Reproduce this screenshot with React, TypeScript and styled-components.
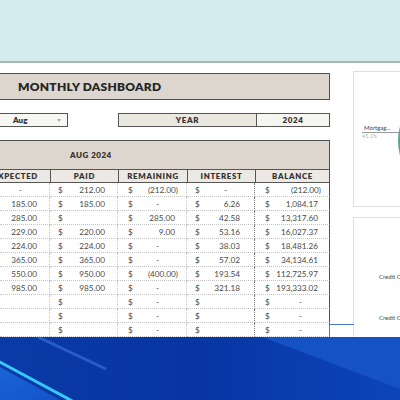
import React from "react";
import styled, { createGlobalStyle } from "styled-components";

const GlobalStyle = createGlobalStyle`
	html, body {
		margin: 0;
		padding: 0;
	}
	body {
		font-family: Lato, "Open Sans", "Liberation Sans", sans-serif;
	}
	#root {
		width: 400px;
		height: 400px;
		overflow: hidden;
	}
`;

const Screen = styled.div`
	display: flex;
	flex-direction: column;
	width: 400px;
	height: 400px;
	overflow: hidden;
	background: #fff;
`;

const TopBand = styled.div`
	height: 61px;
	flex: none;
	background: #d4ecee;
	border-bottom: 2px solid #a9b6b8;
`;

const Sheet = styled.div`
	position: relative;
	display: flex;
	gap: 23px;
	height: 274px;
	flex: none;
	overflow: hidden;
	background: #fff;
`;

const LeftCol = styled.div`
	width: 330px;
	flex: none;
	display: flex;
	flex-direction: column;
	padding-top: 10px;
`;

const TitleBar = styled.div`
	height: 29px;
	margin-left: -2px;
	box-sizing: border-box;
	border: 1.5px solid #505050;
	background: #dcd6ce;
	display: flex;
	align-items: center;
	padding-left: 19px;
	font-size: 12px;
	font-weight: 800;
	letter-spacing: 0.25px;
	color: #262626;
`;

const Controls = styled.div`
	display: flex;
	margin-top: 13px;
	height: 15px;
`;

const Select = styled.div`
	width: 70px;
	margin-left: -2px;
	box-sizing: border-box;
	border: 1.2px solid #555;
	background: #f9f7f3;
	display: flex;
	align-items: center;
	justify-content: space-between;
	padding: 0 6px 0 14px;
	font-size: 8px;
	font-weight: 800;
	color: #333;
`;

const Caret = styled.span`
	width: 0;
	height: 0;
	border-left: 2.5px solid transparent;
	border-right: 2.5px solid transparent;
	border-top: 3px solid #aaa;
`;

const YearGroup = styled.div`
	display: flex;
	margin-left: 50px;
	box-sizing: border-box;
	border: 1.2px solid #555;
`;

const YearBox = styled.div<{ $w: number; $bg: string }>`
	width: ${(p) => p.$w}px;
	box-sizing: border-box;
	background: ${(p) => p.$bg};
	display: flex;
	align-items: center;
	justify-content: center;
	font-size: 8px;
	font-weight: 800;
	letter-spacing: 0.6px;
	color: #333;
	& + & {
		border-left: 1.2px solid #555;
	}
`;

const Table = styled.div`
	margin-top: 13px;
	display: grid;
	grid-template-columns: 50px 68px 69px 68px 75px;
`;

const Band = styled.div`
	grid-column: 1 / -1;
	height: 29px;
	box-sizing: border-box;
	border-top: 1.5px solid #505050;
	border-right: 1.5px solid #505050;
	background: #dcd6ce;
	display: flex;
	align-items: center;
	padding-left: 70px;
	font-size: 8px;
	font-weight: 800;
	letter-spacing: 0.5px;
	color: #333;
`;

const HeadCell = styled.div<{ $last?: boolean; $first?: boolean }>`
	height: 14px;
	box-sizing: border-box;
	background: #ece9e4;
	border-top: 1.2px solid #555;
	border-bottom: 1.2px solid #555;
	border-left: ${(p) => (p.$first ? "none" : "1.2px solid #555")};
	border-right: ${(p) => (p.$last ? "1.5px solid #505050" : "none")};
	display: flex;
	align-items: center;
	justify-content: ${(p) => (p.$first ? "flex-end" : "center")};
	padding-right: ${(p) => (p.$first ? 12 : 0)}px;
	font-size: 7.8px;
	font-weight: 800;
	letter-spacing: 0.7px;
	color: #333;
	white-space: nowrap;
	overflow: hidden;
`;

const Cell = styled.div<{ $strong?: boolean; $last?: boolean }>`
	height: 14px;
	box-sizing: border-box;
	border-bottom: 1px dotted #c4c4c4;
	border-right: ${(p) =>
		p.$last ? "1.5px solid #505050" : p.$strong ? "1px dotted #777" : "1px dotted #c4c4c4"};
	display: flex;
	align-items: center;
	font-size: 8.2px;
	color: #4a4a4a;
	white-space: nowrap;
`;

const Dollar = styled.span<{ $pad: number }>`
	padding-left: ${(p) => p.$pad}px;
`;

const Amount = styled.span<{ $pad: number; $dash?: boolean }>`
	margin-left: auto;
	padding-right: ${(p) => (p.$dash ? 27 : p.$pad)}px;
`;

const RightCol = styled.div`
	flex: 1;
	display: flex;
	flex-direction: column;
	gap: 10px;
	padding-top: 8px;
`;

const Card = styled.div<{ $h: number }>`
	position: relative;
	height: ${(p) => p.$h}px;
	flex: none;
	border: 1px solid #dedede;
	border-right: none;
	overflow: hidden;
	background: #fff;
`;

const PieLabel = styled.div`
	position: absolute;
	left: 8px;
	top: 52px;
	width: 40px;
	font-size: 6px;
	color: #444;
	border-bottom: 0.6px solid #999;
	padding: 0 0 1px 2px;
`;

const PieValue = styled.div`
	position: absolute;
	left: 8px;
	top: 61px;
	font-size: 5.5px;
	color: #b4b4b4;
`;

const Pie = styled.svg`
	position: absolute;
	left: 42px;
	top: -1px;
`;

const LegendText = styled.div<{ $top: number }>`
	position: absolute;
	left: 25px;
	top: ${(p) => p.$top}px;
	font-size: 6px;
	color: #444;
	white-space: nowrap;
`;

const Selection = styled.div`
	position: absolute;
	left: 329px;
	top: 261px;
	width: 24px;
	height: 20px;
	border-top: 1px solid #4a78c8;
	border-left: 1px solid #4a78c8;
`;

const Desktop = styled.svg`
	display: block;
	flex: none;
`;

type Acc = string | null;

type Row = {
	exp: string;
	paid: Acc;
	rem: Acc;
	int: Acc;
	bal: Acc;
};

const rows: Row[] = [
	{ exp: "-", paid: "212.00", rem: "(212.00)", int: "-", bal: "(212.00)" },
	{ exp: "185.00", paid: "185.00", rem: "-", int: "6.26", bal: "1,084.17" },
	{ exp: "285.00", paid: "", rem: "285.00", int: "42.58", bal: "13,317.60" },
	{ exp: "229.00", paid: "220.00", rem: "9.00", int: "53.16", bal: "16,027.37" },
	{ exp: "224.00", paid: "224.00", rem: "-", int: "38.03", bal: "18,481.26" },
	{ exp: "365.00", paid: "365.00", rem: "-", int: "57.02", bal: "34,134.61" },
	{ exp: "550.00", paid: "950.00", rem: "(400.00)", int: "193.54", bal: "112,725.97" },
	{ exp: "985.00", paid: "985.00", rem: "-", int: "321.18", bal: "193,333.02" },
	{ exp: "", paid: "", rem: "-", int: "", bal: "-" },
	{ exp: "", paid: "", rem: "-", int: "", bal: "-" },
	{ exp: "", paid: "", rem: "-", int: "", bal: "-" },
];

const AccCell: React.FC<{
	value: Acc;
	dollarPad: number;
	rightPad: number;
	strong?: boolean;
	last?: boolean;
}> = ({ value, dollarPad, rightPad, strong, last }) => {
	const paren = value ? value.startsWith("(") : false;
	return (
		<Cell $strong={strong} $last={last}>
			<Dollar $pad={dollarPad}>$</Dollar>
			{value ? (
				<Amount $pad={paren ? rightPad - 3 : rightPad} $dash={value === "-"}>
					{value}
				</Amount>
			) : null}
		</Cell>
	);
};

const App: React.FC = () => {
	return (
		<Screen>
			<GlobalStyle />
			<TopBand />
			<Sheet>
				<LeftCol>
					<TitleBar>MONTHLY DASHBOARD</TitleBar>
					<Controls>
						<Select>
							Aug
							<Caret />
						</Select>
						<YearGroup>
							<YearBox $w={137} $bg="#ebe7e1">
								YEAR
							</YearBox>
							<YearBox $w={73} $bg="#f7f5f2">
								2024
							</YearBox>
						</YearGroup>
					</Controls>
					<Table>
						<Band>AUG 2024</Band>
						<HeadCell $first>EXPECTED</HeadCell>
						<HeadCell>PAID</HeadCell>
						<HeadCell>REMAINING</HeadCell>
						<HeadCell>INTEREST</HeadCell>
						<HeadCell $last>BALANCE</HeadCell>
						{rows.map((r, i) => (
							<React.Fragment key={i}>
								<Cell>
									{r.exp && (
										<Amount $pad={12} $dash={r.exp === "-"}>
											{r.exp}
										</Amount>
									)}
								</Cell>
								<AccCell value={r.paid} dollarPad={8} rightPad={12} />
								<AccCell value={r.rem} dollarPad={10} rightPad={11} />
								<AccCell value={r.int} dollarPad={8} rightPad={14} strong />
								<AccCell value={r.bal} dollarPad={10} rightPad={11} last />
							</React.Fragment>
						))}
					</Table>
				</LeftCol>
				<RightCol>
					<Card $h={134}>
						<PieLabel>Mortgag...</PieLabel>
						<PieValue>45.1%</PieValue>
						<Pie width="120" height="140" viewBox="0 0 120 140">
							<circle cx="57" cy="70" r="55" fill="#5aa596" />
						</Pie>
					</Card>
					<Card $h={130}>
						<LegendText $top={55}>Credit C</LegendText>
						<LegendText $top={96}>Credit C</LegendText>
					</Card>
				</RightCol>
				<Selection />
			</Sheet>
			<Desktop width="400" height="63" viewBox="0 0 400 63">
				<defs>
					<linearGradient id="bg" x1="0" y1="0" x2="1" y2="0">
						<stop offset="0" stopColor="#0a3aa6" />
						<stop offset="0.5" stopColor="#0736a4" />
						<stop offset="1" stopColor="#0c44b8" />
					</linearGradient>
					<linearGradient id="corner" x1="0" y1="0" x2="1" y2="1">
						<stop offset="0" stopColor="#1a64d8" />
						<stop offset="1" stopColor="#1452c8" />
					</linearGradient>
				</defs>
				<rect width="400" height="63" fill="url(#bg)" />
				<polygon points="262,0 400,0 400,52" fill="#1552c6" />
				<polygon points="0,30 0,63 60,63" fill="url(#corner)" />
				<line x1="-4" y1="23" x2="76" y2="66" stroke="#38c8ff" strokeWidth="3" />
				<line x1="38" y1="0" x2="106" y2="32" stroke="#2e66d8" strokeWidth="3" opacity="0.8" />
			</Desktop>
		</Screen>
	);
};

export default App;
